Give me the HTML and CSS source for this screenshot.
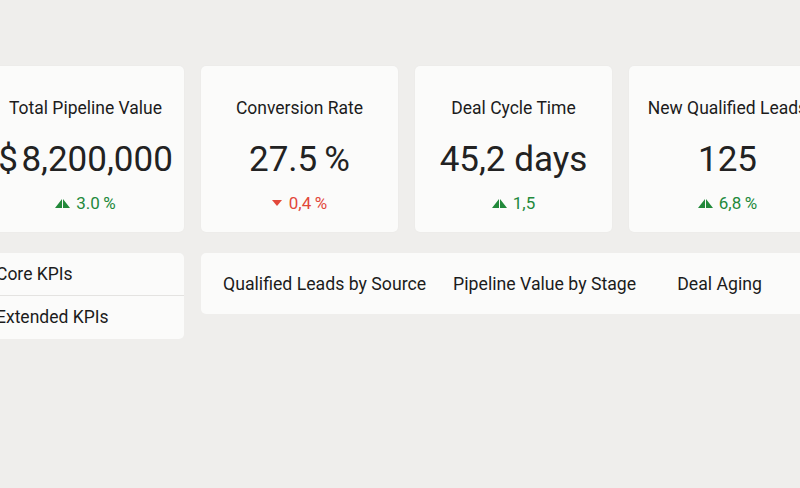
FILE: index.html
```html
<!DOCTYPE html>
<html>
<head>
<meta charset="utf-8">
<link rel="stylesheet" href="styles.css">
</head>
<body>
<div class="page">
  <div class="kpis">
    <div class="card">
      <div class="title">Total Pipeline Value</div>
      <div class="value">$&#8202;8,200,000</div>
      <div class="delta up"><svg class="tri-up" viewBox="0 0 15 9"><path d="M7 0 L7 9 L0 9 Z M8 0 L8 9 L15 9 Z" fill="currentColor"/></svg>3.0&#8201;%</div>
    </div>
    <div class="card">
      <div class="title">Conversion Rate</div>
      <div class="value">27.5&#8201;%</div>
      <div class="delta down"><svg class="tri-down" viewBox="0 0 10 6"><path d="M0 0 L10 0 L5 6 Z" fill="currentColor"/></svg>0,4&#8201;%</div>
    </div>
    <div class="card">
      <div class="title">Deal Cycle Time</div>
      <div class="value">45,2 days</div>
      <div class="delta up"><svg class="tri-up" viewBox="0 0 15 9"><path d="M7 0 L7 9 L0 9 Z M8 0 L8 9 L15 9 Z" fill="currentColor"/></svg>1,5</div>
    </div>
    <div class="card">
      <div class="title">New Qualified Leads</div>
      <div class="value">125</div>
      <div class="delta up"><svg class="tri-up" viewBox="0 0 15 9"><path d="M7 0 L7 9 L0 9 Z M8 0 L8 9 L15 9 Z" fill="currentColor"/></svg>6,8&#8201;%</div>
    </div>
  </div>
  <div class="lower">
    <div class="side">
      <div class="side-item">Core KPIs</div>
      <div class="side-item">Extended KPIs</div>
    </div>
    <div class="tabs">
      <div class="tab">Qualified Leads by Source</div>
      <div class="tab">Pipeline Value by Stage</div>
      <div class="tab">Deal Aging</div>
    </div>
  </div>
</div>
</body>
</html>
```

FILE: styles.css
```css
html, body {
  margin: 0;
  padding: 0;
  background: #efeeec;
  overflow: hidden;
}
body {
  width: 800px;
  height: 488px;
  font-family: Roboto, "Liberation Sans", sans-serif;
  color: #1c1c1c;
}
.page {
  margin-left: -13px;
  padding-top: 66px;
  width: 860px;
}
.kpis {
  display: flex;
  gap: 17px;
}
.card {
  width: 197px;
  height: 166px;
  flex: none;
  background: #fbfbfa;
  border-radius: 5px;
  box-shadow: 0 0 2px rgba(0,0,0,0.04);
  display: flex;
  flex-direction: column;
  align-items: center;
  box-sizing: border-box;
  padding-top: 31px;
  white-space: nowrap;
}
.title {
  font-size: 17.5px;
  line-height: 22px;
  color: #1c1c1c;
}
.value {
  font-size: 35px;
  line-height: 40px;
  margin-top: 21px;
  color: #222;
}
.delta {
  font-size: 17px;
  line-height: 20px;
  margin-top: 13px;
  display: flex;
  align-items: center;
  gap: 6px;
}
.up { color: #22893a; }
.down { color: #e2483b; }
.tri-up { width: 15px; height: 9px; }
.tri-down { width: 10px; height: 6px; margin-right: 1px; }
.lower {
  display: flex;
  gap: 17px;
  margin-top: 21px;
  align-items: flex-start;
}
.side {
  width: 197px;
  flex: none;
  background: #fbfbfa;
  border-radius: 5px;
  display: flex;
  flex-direction: column;
}
.side-item {
  height: 42px;
  line-height: 42px;
  padding-left: 9px;
  font-size: 17.5px;
}
.side-item + .side-item {
  border-top: 1px solid #e4e3e1;
  height: 43px;
  line-height: 43px;
}
.tabs {
  flex: none;
  width: 640px;
  height: 61px;
  background: #fbfbfa;
  border-radius: 5px;
  display: flex;
  align-items: center;
  padding-left: 22px;
  box-sizing: border-box;
}
.tab {
  font-size: 17.7px;
  white-space: nowrap;
  margin-right: 27px;
}
.tab:nth-child(2) { margin-right: 41px; }
```
